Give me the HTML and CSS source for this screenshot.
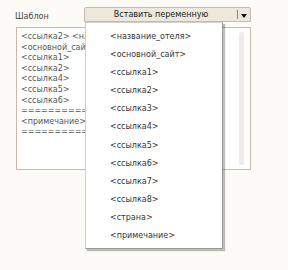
FILE: index.html
```html
<!DOCTYPE html>
<html lang="ru">
<head>
    <meta charset="UTF-8">
    <title>Шаблон</title>
    <link rel="stylesheet" href="styles.css">
</head>
<body>
    <div class="editor">
        <div class="editor-head">
            <label class="editor-label">Шаблон</label>
            <div class="var-button">
                <span class="var-button-text">Вставить переменную</span>
                <span class="var-button-arrow"></span>
            </div>
        </div>

        <!-- Template text -->
        <div class="template">
            <div class="template-text">
                <div>&lt;ссылка2&gt; &lt;название_отеля&gt;</div>
                <div>&lt;основной_сайт&gt;</div>
                <div>&lt;ссылка1&gt;</div>
                <div>&lt;ссылка2&gt;</div>
                <div>&lt;ссылка4&gt;</div>
                <div>&lt;ссылка5&gt;</div>
                <div>&lt;ссылка6&gt;</div>
                <div>====================</div>
                <div>&lt;примечание&gt;</div>
                <div>====================</div>
            </div>
            <div class="scroll-thumb"></div>
        </div>

        <!-- Variables menu -->
        <ul class="var-menu">
            <li>&lt;название_отеля&gt;</li>
            <li>&lt;основной_сайт&gt;</li>
            <li>&lt;ссылка1&gt;</li>
            <li>&lt;ссылка2&gt;</li>
            <li>&lt;ссылка3&gt;</li>
            <li>&lt;ссылка4&gt;</li>
            <li>&lt;ссылка5&gt;</li>
            <li>&lt;ссылка6&gt;</li>
            <li>&lt;ссылка7&gt;</li>
            <li>&lt;ссылка8&gt;</li>
            <li>&lt;страна&gt;</li>
            <li>&lt;примечание&gt;</li>
        </ul>
    </div>
</body>
</html>
```

FILE: styles.css
```css
html, body {
    height: 100%;
}
body {
    margin: 0;
    min-height: 270px;
    background-color: #fcfbf7;
    font-family: "DejaVu Sans", Tahoma, sans-serif;
    font-size: 8px;
    color: #333;
}
.editor {
    position: relative;
    width: 235px;
    height: 250px;
    padding: 7px 0 0 16px;
}
.editor-head {
    display: flex;
    height: 15px;
    margin-bottom: 5px;
}
.editor-label {
    width: 69px;
    margin-left: -1px;
    align-self: flex-end;
    line-height: 10px;
    color: #444;
}
.var-button {
    display: flex;
    flex: 1;
    box-sizing: border-box;
    background: #ece8dc;
    border: 1px solid #c4bcaa;
    border-radius: 2px 2px 0 0;
}
.var-button-text {
    flex: 1;
    text-align: center;
    line-height: 13px;
    color: #222;
}
.var-button-arrow {
    position: relative;
    width: 12px;
    border-left: 1px solid #8a8578;
    margin: 2px 0;
}
.var-button-arrow::after {
    content: "";
    position: absolute;
    left: 3px;
    top: 4px;
    border-left: 3px solid transparent;
    border-right: 3px solid transparent;
    border-top: 4px solid #111;
}
.template {
    position: relative;
    box-sizing: border-box;
    height: 143px;
    padding: 4px 0 0 4px;
    background: white;
    border: 1px solid #c9baa8;
    overflow: hidden;
    white-space: nowrap;
    line-height: 10.6px;
    color: #555;
}
.template-text {
    width: 64px;
    overflow: hidden;
}
.scroll-thumb {
    position: absolute;
    right: 6px;
    top: 4px;
    width: 5px;
    height: 133px;
    border-radius: 3px;
    background: #ececec;
}
.var-menu {
    position: absolute;
    left: 85px;
    top: 22px;
    width: 138px;
    box-sizing: border-box;
    margin: 0;
    padding: 5px 0 3px 24px;
    list-style: none;
    background: white;
    border: 1px solid #cfcfcf;
    border-right-color: #9a9a9a;
    border-bottom-color: #9a9a9a;
    box-shadow: 2px 2px 1px rgba(0, 0, 0, 0.25);
}
.var-menu li {
    height: 18.1px;
    line-height: 18px;
}
```
